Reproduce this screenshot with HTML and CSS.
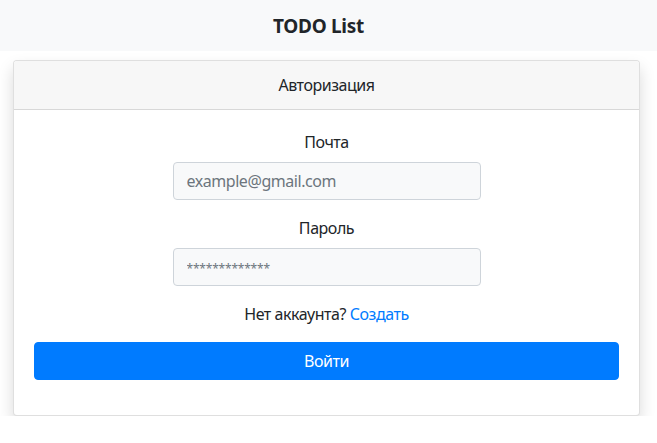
FILE: index.html
```html
<!DOCTYPE html>
<html lang="ru">
<head>
<meta charset="utf-8">
<title>TODO List</title>
<link rel="stylesheet" href="styles.css">
</head>
<body>
<header class="topbar">
  <h1 class="brand">TODO List</h1>
</header>
<main class="page">
  <section class="card">
    <div class="card-header">Авторизация</div>
    <form class="card-body">
      <div class="field">
        <label class="field-label" for="email">Почта</label>
        <input class="field-input" id="email" type="email" placeholder="example@gmail.com">
      </div>
      <div class="field">
        <label class="field-label" for="pass">Пароль</label>
        <input class="field-input field-pass" id="pass" type="password" placeholder="*************">
      </div>
      <p class="signup">Нет аккаунта? <a class="link" href="#">Создать</a></p>
      <button class="btn-primary" type="button">Войти</button>
    </form>
  </section>
</main>
</body>
</html>
```
FILE: styles.css
```css
* { box-sizing: border-box; }
html, body { margin: 0; padding: 0; }
body {
  font-family: "Noto Sans", "Open Sans", "Liberation Sans", sans-serif;
  font-size: 16px;
  line-height: 24px;
  letter-spacing: -0.45px;
  color: #212529;
  background: #fff;
}
.topbar {
  height: 51px;
  background: #f8f9fa;
  display: flex;
  align-items: center;
  justify-content: center;
  padding-right: 20px;
}
.brand {
  margin: 0;
  font-size: 19px;
  font-weight: 700;
  line-height: 24px;
  letter-spacing: -0.3px;
}
.page {
  padding: 9px 17px 0 13px;
}
.card {
  border: 1px solid rgba(0,0,0,.125);
  border-radius: 4px;
  background: #fff;
  box-shadow: 0 8px 16px rgba(0,0,0,.15);
  overflow: hidden;
}
.card-header {
  padding: 12px 20px;
  background: #f7f7f7;
  border-bottom: 1px solid rgba(0,0,0,.125);
  text-align: center;
}
.card-body {
  padding: 20px 20px 20px;
  display: flex;
  flex-direction: column;
  align-items: center;
  margin: 0;
}
.field {
  display: flex;
  flex-direction: column;
  align-items: center;
  margin-bottom: 16px;
}
.field-label {
  margin-bottom: 8px;
}
.field-input {
  width: 308px;
  height: 38px;
  padding: 6px 13px;
  font: inherit;
  letter-spacing: -0.45px;
  color: #495057;
  background: #f8f9fa;
  border: 1px solid #ced4da;
  border-radius: 4px;
}
.field-input::placeholder { color: #6c757d; opacity: 1; }
.field-pass::placeholder { font-size: 12px; letter-spacing: -0.2px; }
.signup {
  margin: 0 0 16px;
}
.link { color: #007bff; text-decoration: none; }
.btn-primary {
  align-self: stretch;
  height: 38px;
  margin-bottom: 15px;
  font: inherit;
  letter-spacing: -0.45px;
  color: #fff;
  background: #007bff;
  border: 1px solid #007bff;
  border-radius: 4px;
}
```
